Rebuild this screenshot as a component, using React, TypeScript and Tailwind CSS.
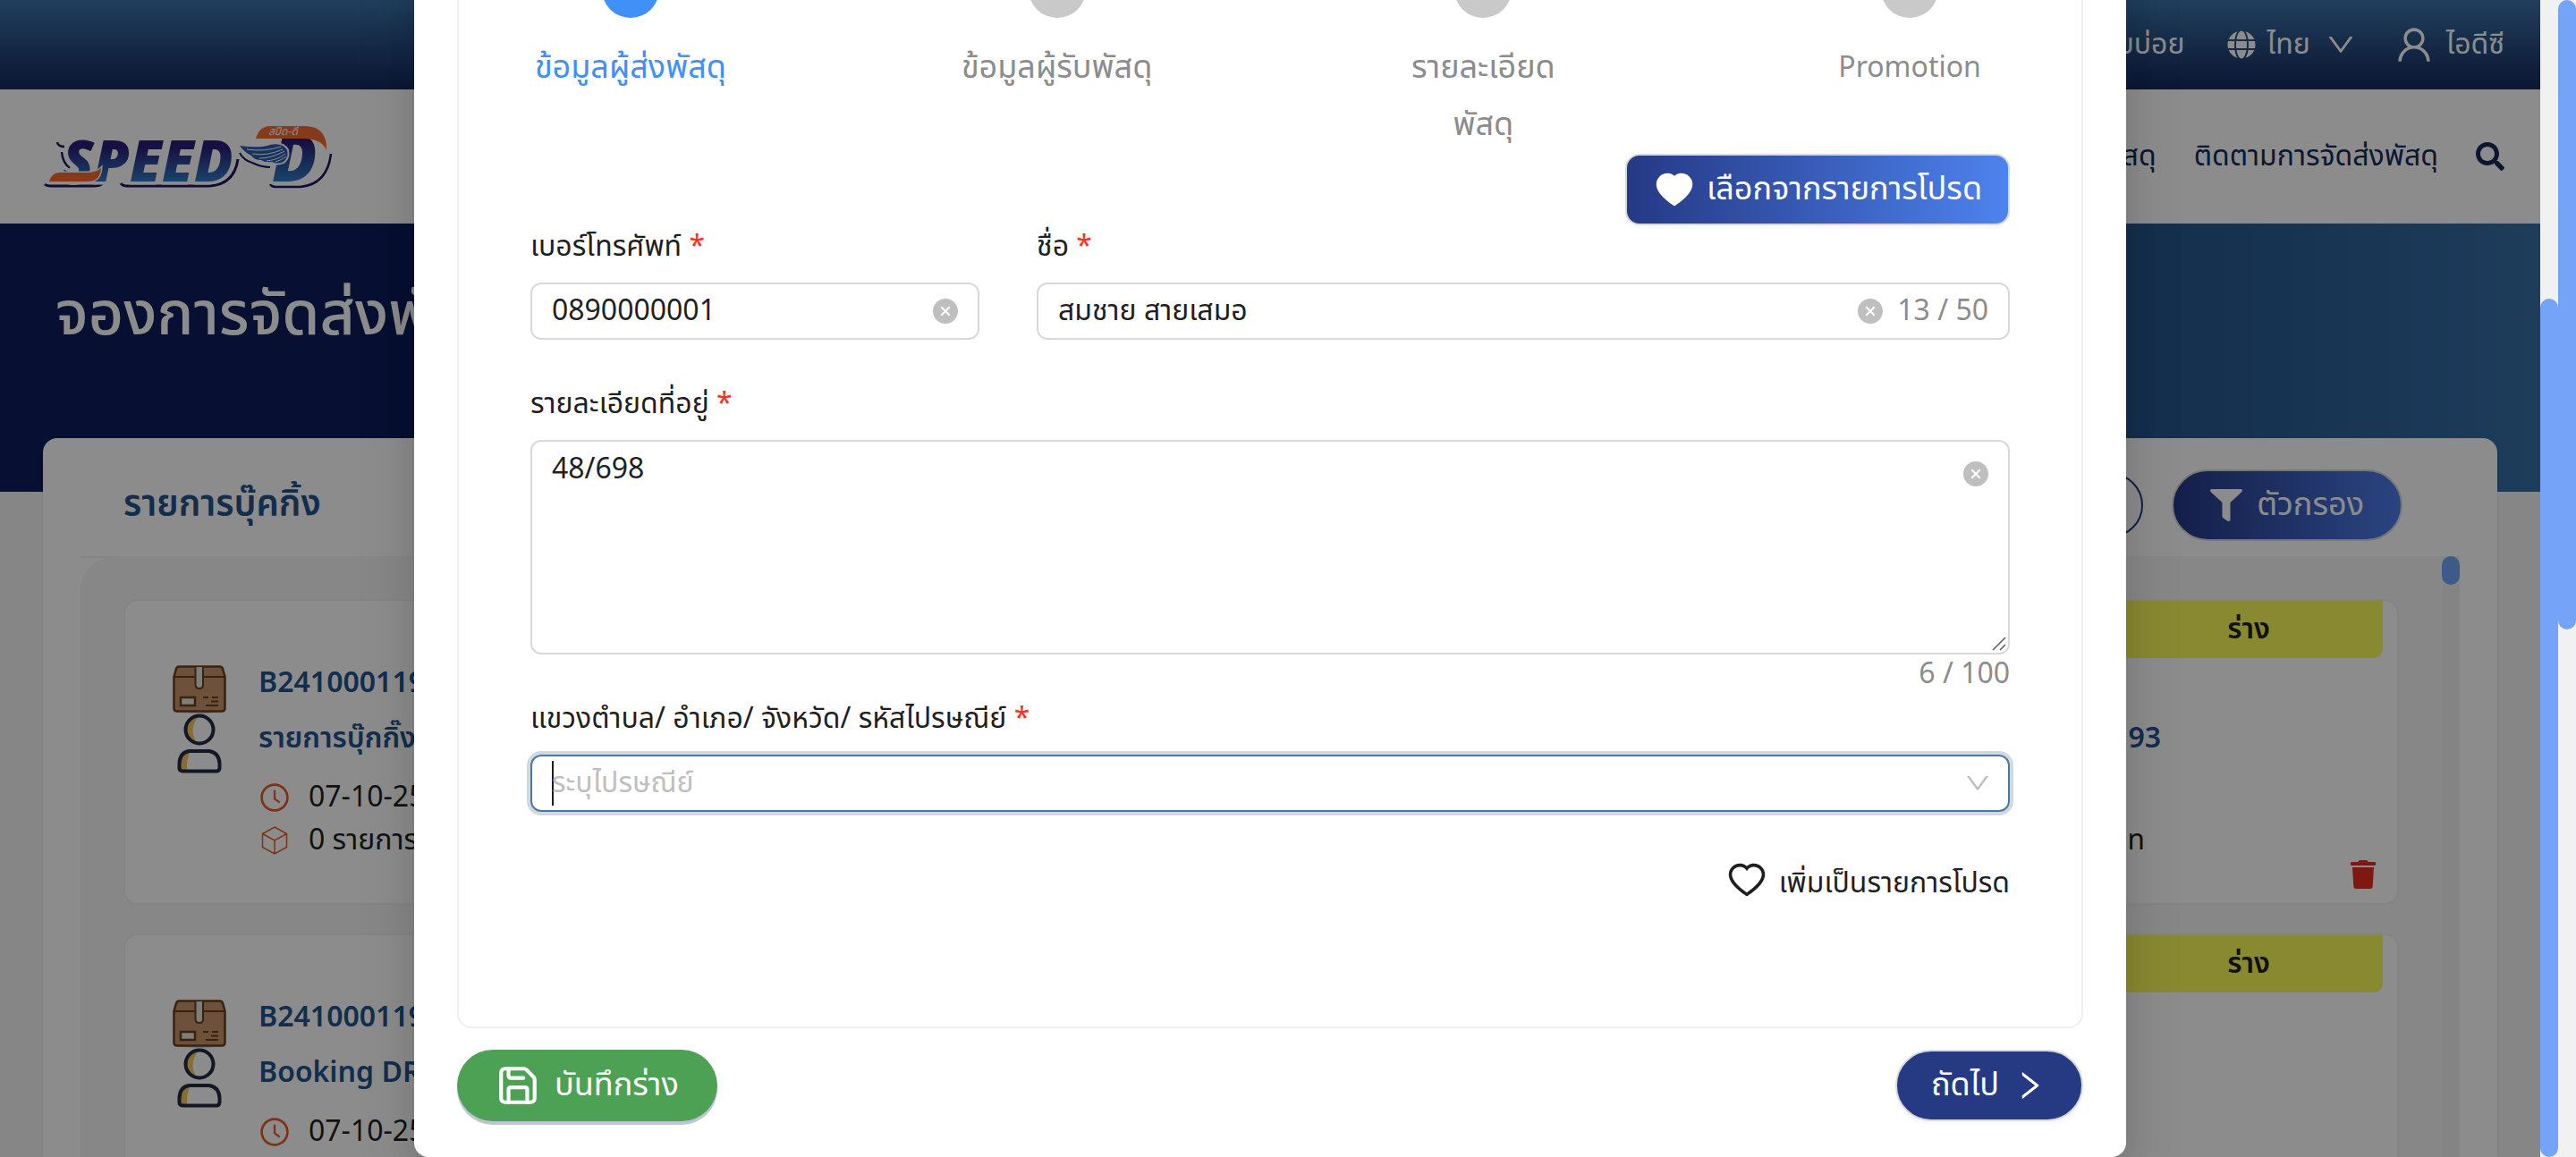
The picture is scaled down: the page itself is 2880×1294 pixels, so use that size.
import type { ReactNode } from "react";
import {
  AiFillCloseCircle,
  AiFillHeart,
  AiOutlineClockCircle,
  AiOutlineDown,
  AiOutlineHeart,
  AiOutlineRight,
  AiOutlineUser,
} from "react-icons/ai";
import { FaGlobe, FaSearch, FaTrash } from "react-icons/fa";
import { Save } from "lucide-react";

function Logo() {
  return (
    <svg className="h-[90px] w-[340px]" viewBox="0 0 340 90" role="img" aria-label="SPEED-D">
      <defs>
        <linearGradient id="logoBlue" x1="0" y1="0" x2="0" y2="1">
          <stop offset="0.35" stopColor="#2a1f7a" />
          <stop offset="0.8" stopColor="#2f7fc4" />
        </linearGradient>
      </defs>
      <path d="M10 76 Q12 78 16 78 H66 Q74 78 78 71 M95 75 Q97 78 102 78 H195 Q222 76 226 48" fill="none" stroke="#1d1660" strokeWidth="3" />
      <path d="M262 76 Q264 79 268 79 H296 Q326 76 330 42" fill="none" stroke="#1d1660" strokeWidth="2.500" />
      <path d="M24 29 Q25 34 32 34 M29 40 Q30 52 38 58" fill="none" stroke="#1d1660" strokeWidth="2.500" />
      <g
        fontFamily="'Noto Sans', sans-serif"
        fontStyle="italic"
        fontWeight="900"
        stroke="#ffffff"
        strokeWidth="7"
        strokeLinejoin="round"
        paintOrder="stroke"
        fill="url(#logoBlue)"
      >
        <text x="30" y="73" fontSize="64">SPEED</text>
        <text x="264" y="73" fontSize="74">D</text>
      </g>
      <path
        d="M15 73 Q18 63 26 63 H56 Q68 63 73 58 Q72 73 58 73 Z"
        fill="#f26a2e"
        stroke="#ffffff"
        strokeWidth="3"
        paintOrder="stroke"
      />
      <path d="M246 25 Q250 11 262 11 H302 Q326 12 325 38 Q320 25 298 25 Z" fill="#f26a2e" />
      <text x="260" y="21" fontFamily="'Noto Sans Thai', 'Noto Sans', sans-serif" fontStyle="italic" fontSize="12" fill="#ffffff">
        สปีด-ดี
      </text>
      <path
        d="M228 33 Q250 36 262 32 Q276 29 281 38 Q283 46 277 51 Q270 54 264 51 Q256 52 252 49 Q244 49 241 44 Q234 41 228 33 Z"
        fill="#2a5fae"
        stroke="#ffffff"
        strokeWidth="4"
        strokeLinejoin="round"
        paintOrder="stroke"
      />
      <path
        d="M236 37 Q256 40 274 34 M242 42 Q258 45 276 37 M250 47 Q264 47 278 39 M258 50 Q270 49 279 42 M268 51 Q275 49 280 45"
        fill="none"
        stroke="#ffffff"
        strokeWidth="1"
      />
      <path d="M228 41 Q232 49 242 52 Q252 57 262 57" fill="none" stroke="#1d1660" strokeWidth="2" />
    </svg>
  );
}

function PackageIcon() {
  return (
    <svg className="h-[54px] w-[60px]" viewBox="0 0 60 54" aria-hidden="true">
      <ellipse cx="30" cy="51" rx="27" ry="3" fill="#cfdbe6" />
      <path
        d="M7 1.5 H53 Q55 1.5 56 4 L58.500 13 V48 Q58.500 51.500 55 51.500 H5 Q1.500 51.500 1.500 48 V13 L4 4 Q5 1.500 7 1.500 Z"
        fill="#c8946a"
        stroke="#6b3e20"
        strokeWidth="2.500"
      />
      <path d="M2 13 H58" stroke="#6b3e20" strokeWidth="2" />
      <path d="M25.500 2 V22 Q25.500 26 30 26 Q34 26 34 22 V2" fill="#e3e3df" stroke="#6b3e20" strokeWidth="2" />
      <rect x="9" y="36" width="16" height="9" fill="#e3e3df" stroke="#6b3e20" strokeWidth="2.500" />
      <path d="M34 36 H40 M44 36 H51 M43 40.500 H51 M37 45 H51" stroke="#6b3e20" strokeWidth="2" />
    </svg>
  );
}

function PersonIcon() {
  return (
    <svg className="h-[68px] w-[60px]" viewBox="0 0 60 68" aria-hidden="true">
      <circle cx="30" cy="18" r="16" fill="#ffffff" />
      <path d="M30 2 Q12 4 14 20 Q16 32 28 34 Q16 18 30 2 Z" fill="#f7c65b" />
      <circle cx="30" cy="18" r="15.500" fill="none" stroke="#232a45" strokeWidth="4" />
      <path d="M8 64 V54 Q9 43 20 42 H40 Q52 43 53 54 V64 Z" fill="#ffffff" />
      <path d="M8 64 V54 Q9 43 20 42 Q15 52 16 64 Z" fill="#f7c65b" />
      <path
        d="M18 42 H41 Q52 44 52.500 56 V61 Q52 64.500 49 64.500 H11 Q7.500 64 7.500 61 V56 Q8 44 18 42 Z"
        fill="none"
        stroke="#232a45"
        strokeWidth="4"
        strokeLinejoin="round"
      />
    </svg>
  );
}

function CubeIcon() {
  return (
    <svg className="mx-0.5 size-8" viewBox="0 0 32 32" fill="none" stroke="#e85a2c" strokeWidth="1.500" aria-hidden="true">
      <path d="M16 1 L29.500 8.500 V23.500 L16 31 L2.500 23.500 V8.500 Z M2.500 8.500 L16 16 L29.500 8.500 M16 16 V31" />
    </svg>
  );
}

function FunnelIcon() {
  return (
    <svg className="h-9 w-9" viewBox="0 0 36 36" fill="currentColor" aria-hidden="true">
      <path d="M1 0 H35 Q36.500 1 35.500 3 L22.500 15 V35 Q21 36.500 19 35.500 L14 32 Q13.500 31.500 13.500 30 V15 L0.500 3 Q-0.500 1 1 0 Z" />
    </svg>
  );
}

type Booking = { code: string; title: string; date: string; items: string; tracking?: string; price?: string };

const bookings: Booking[] = [
  {
    code: "B2410001193",
    title: "รายการบุ๊กกิ๊ง",
    date: "07-10-2567",
    items: "0 รายการ",
    tracking: "B2410001193",
    price: "0.00 บาท",
  },
  { code: "B2410001192", title: "Booking DRY", date: "07-10-2567", items: "0 รายการ" },
];

function BookingCard({ booking }: { booking: Booking }) {
  return (
    <article className="relative flex h-[342px] shrink-0 rounded-2xl border-2 border-[#f0f0f0] bg-white pt-[61px] pr-6 pl-[53px]">
      <div className="mt-[11px] mr-9 flex flex-col">
        <PackageIcon />
        <PersonIcon />
      </div>
      <div className="flex-1 text-[32px]">
        <p className="leading-[62px] font-semibold text-[#23528c]">{booking.code}</p>
        <p className="leading-[62px] font-semibold text-[#23528c]">{booking.title}</p>
        <p className="mt-[11px] flex items-center gap-5 leading-[48px] text-[#1f1f1f]">
          <AiOutlineClockCircle className="size-9 text-[#e85a2c]" />
          {booking.date}
        </p>
        <p className="flex items-center gap-5 leading-[48px] text-[#1f1f1f]">
          <CubeIcon />
          {booking.items}
        </p>
      </div>
      {booking.tracking && (
        <div className="mr-[212px] flex flex-col items-end pt-[62px] text-[32px]">
          <p className="leading-[62px] font-semibold text-[#23528c]">{booking.tracking}</p>
          <p className="mt-[60px] mr-[18px] leading-[46px] text-[#1f1f1f]">{booking.price}</p>
        </div>
      )}
      <button type="button" aria-label="ลบ" className="mb-4 self-end text-[#ec2a1f]">
        <FaTrash className="h-8 w-7" />
      </button>
      <span className="absolute top-0 right-4 flex h-16 w-[300px] items-center justify-center rounded-b-[10px] bg-[#f9f95b] text-[32px] font-semibold text-[#1f1f1f]">
        ร่าง
      </span>
    </article>
  );
}

function Page() {
  return (
    <div className="flex h-full flex-col bg-[#f4f4f4]">
      <div className="flex h-25 shrink-0 items-center justify-end bg-linear-to-b from-[#3c74aa] to-[#142a5c] pr-10 text-[32px] text-white">
        <a href="#faq" className="mr-12">คำถามที่พบบ่อย</a>
        <button type="button" className="mr-10 flex items-center gap-3">
          <FaGlobe className="size-8" />
          ไทย
          <AiOutlineDown className="ml-1 size-9" />
        </button>
        <a href="#profile" className="flex items-center gap-3">
          <AiOutlineUser className="size-12" />
          ไอดีซี
        </a>
      </div>
      <header className="flex h-[150px] shrink-0 items-center justify-between bg-white px-10">
        <Logo />
        <nav className="flex items-center gap-[42px] text-[32px] text-[#142a5c]">
          <a href="#booking">จองการจัดส่งพัสดุ</a>
          <a href="#tracking">ติดตามการจัดส่งพัสดุ</a>
          <button type="button" aria-label="ค้นหา">
            <FaSearch className="size-8" />
          </button>
        </nav>
      </header>
      <div className="h-[300px] shrink-0 bg-linear-to-r from-[#0d1d5b] from-50% to-[#356fa5] px-[62px] pt-16">
        <h1 className="text-[68px] leading-[80px] font-medium text-white">จองการจัดส่งพัสดุ</h1>
      </div>
      <main className="z-0 mx-12 -mt-15 flex min-h-0 flex-1 flex-col rounded-t-2xl bg-white px-[42px] shadow">
        <div className="flex h-[134px] shrink-0 items-center justify-between border-b-2 border-[#f0f0f0] pt-[18px] pr-16 pl-12">
          <h2 className="text-[40px] font-semibold text-[#23528c]">รายการบุ๊คกิ้ง</h2>
          <div className="flex items-center gap-8">
            <button type="button" className="h-[72px] rounded-full border-2 border-[#253985] px-10 text-[36px] text-[#253985]">
              สร้างรายการ
            </button>
            <button
              type="button"
              className="flex h-20 items-center gap-4 rounded-full border-2 border-[#d9d9d9] bg-linear-to-r from-[#253985] to-[#4e7dec] px-[41px] text-[36px] text-white"
            >
              <FunnelIcon />
              ตัวกรอง
            </button>
          </div>
        </div>
        <div className="-mt-0.5 flex min-h-0 flex-1">
          <div className="flex flex-1 flex-col gap-8 overflow-hidden rounded-tl-[38px] bg-[#f6f6f6] px-12 pt-12">
            {bookings.map((booking) => (
              <BookingCard key={booking.code} booking={booking} />
            ))}
          </div>
          <div className="w-5 bg-[#f0f0f0]">
            <div className="h-8 rounded-full bg-[#71a4f8]" />
          </div>
        </div>
      </main>
    </div>
  );
}

const steps = ["ข้อมูลผู้ส่งพัสดุ", "ข้อมูลผู้รับพัสดุ", "รายละเอียดพัสดุ", "Promotion"];

function Steps() {
  return (
    <ol className="flex justify-between">
      {steps.map((step, index) => (
        <li key={step} className="flex w-56 flex-col items-center gap-6 text-center">
          <span className={index === 0 ? "size-16 rounded-full bg-[#4190f7]" : "size-16 rounded-full bg-[#c9c9c9]"} />
          <span
            lang="th"
            className={
              index === 0
                ? "text-[36px] leading-16 text-[#4190f7]"
                : index === 3
                  ? "text-[32px] leading-16 text-[#8c8c8c]"
                  : "text-[36px] leading-16 text-[#8c8c8c]"
            }
          >
            {step}
          </span>
        </li>
      ))}
    </ol>
  );
}

function FieldLabel({ htmlFor, children }: { htmlFor: string; children: ReactNode }) {
  return (
    <label htmlFor={htmlFor} className="mb-4 block h-12 text-[32px] leading-[48px]">
      {children} <span className="text-[#f5321f]">*</span>
    </label>
  );
}

function ClearButton() {
  return (
    <button type="button" aria-label="ล้าง" className="text-[#bfbfbf]">
      <AiFillCloseCircle className="size-8" />
    </button>
  );
}

function SenderDialog() {
  return (
    <div role="dialog" aria-modal="true" className="w-[67.4%] shrink-0 rounded-2xl bg-white px-12 pt-12 pb-10 text-[#1f1f1f] shadow-[0_12px_32px_rgba(0,0,0,0.08),0_18px_56px_16px_rgba(0,0,0,0.08)]">
      <div className="rounded-2xl border-2 border-[#f0f0f0] px-20 pt-12 pb-32">
        <Steps />
        <div className="flex justify-end">
          <button
            type="button"
            className="flex h-20 items-center gap-3 rounded-2xl border-2 border-[#d9d9d9] bg-linear-to-r from-[#253985] to-[#4e83ef] px-[29px] text-[36px] text-white shadow-[0_4px_0_rgba(0,0,0,0.02)]"
          >
            <AiFillHeart className="size-12" />
            เลือกจากรายการโปรด
          </button>
        </div>
        <div className="grid grid-cols-[6fr_13fr] gap-x-16 gap-y-12">
          <div>
            <FieldLabel htmlFor="phone">เบอร์โทรศัพท์</FieldLabel>
            <div className="flex h-16 items-center rounded-xl border-2 border-[#d9d9d9] pr-5 pl-[22px]">
              <input id="phone" defaultValue="0890000001" className="min-w-0 flex-1 text-[32px] outline-none" />
              <ClearButton />
            </div>
          </div>
          <div>
            <FieldLabel htmlFor="name">ชื่อ</FieldLabel>
            <div className="flex h-16 items-center gap-[14px] rounded-xl border-2 border-[#d9d9d9] px-[22px]">
              <input id="name" defaultValue="สมชาย สายเสมอ" className="min-w-0 flex-1 text-[32px] outline-none" />
              <ClearButton />
              <span className="text-[32px] text-[#8c8c8c]">13 / 50</span>
            </div>
          </div>
        </div>
        <div className="mt-12">
          <FieldLabel htmlFor="address">รายละเอียดที่อยู่</FieldLabel>
          <div className="relative">
            <textarea
              id="address"
              defaultValue="48/698"
              className="block h-60 w-full resize-none rounded-xl border-2 border-[#d9d9d9] py-[7px] pr-20 pl-[22px] text-[32px] leading-[48px] outline-none"
            />
            <div className="absolute top-[22px] right-[22px] flex">
              <ClearButton />
            </div>
            <svg
              className="absolute right-1 bottom-1 size-4"
              viewBox="0 0 16 16"
              fill="none"
              stroke="#5a5a5a"
              strokeWidth="1.500"
              aria-hidden="true"
            >
              <path d="M1 15 L15 1 M9 15 L15 9" />
            </svg>
          </div>
          <p className="h-12 text-right text-[32px] leading-[44px] text-[#8c8c8c]">6 / 100</p>
        </div>
        <div>
          <FieldLabel htmlFor="postcode">แขวงตำบล/ อำเภอ/ จังหวัด/ รหัสไปรษณีย์</FieldLabel>
          <div className="flex h-16 items-center rounded-xl border-2 border-[#4a78a5] pr-[18px] pl-[22px] ring-4 ring-[#cfd9de]">
            <span className="-mr-0.5 h-[50px] w-0.5 bg-[#1f1f1f]" />
            <input
              id="postcode"
              role="combobox"
              aria-expanded="false"
              placeholder="ระบุไปรษณีย์"
              className="min-w-0 flex-1 text-[32px] outline-none placeholder:text-[#bfbfbf]"
            />
            <AiOutlineDown className="size-8 text-[#bfbfbf]" />
          </div>
        </div>
        <div className="mt-12 flex justify-end">
          <button type="button" className="flex h-16 items-center gap-3 text-[32px]">
            <AiOutlineHeart className="mb-2 size-12" />
            เพิ่มเป็นรายการโปรด
          </button>
        </div>
      </div>
      <div className="mt-6 flex items-center justify-between">
        <button
          type="button"
          className="flex h-20 items-center gap-4 rounded-full bg-[#4da154] px-[43px] text-[36px] text-white shadow-[0_4px_0_#bcc6d2]"
        >
          <Save className="size-[50px]" strokeWidth={2} />
          บันทึกร่าง
        </button>
        <button
          type="button"
          className="flex h-20 items-center gap-[14px] rounded-full border-2 border-[#d9d9d9] bg-[#263a84] px-[38px] text-[36px] text-white shadow-[0_4px_0_rgba(0,0,0,0.02)]"
        >
          ถัดไป
          <AiOutlineRight className="size-10" />
        </button>
      </div>
    </div>
  );
}

export default function App() {
  return (
    <div className="flex h-screen overflow-hidden font-['Noto_Sans_Thai','Noto_Sans',sans-serif]">
      <div className="relative min-w-0 flex-1">
        <Page />
        <div className="absolute inset-0 z-10 flex items-end justify-center overflow-hidden bg-black/45">
          <SenderDialog />
        </div>
      </div>
      <div className="flex w-5 flex-col justify-end bg-[#f1f1f1]">
        <div className="h-[74.2%] rounded-full bg-[#74a3f7]" />
      </div>
      <div className="w-5 bg-[#f1f1f1]">
        <div className="h-[54.4%] rounded-full bg-[#74a3f7]" />
      </div>
    </div>
  );
}
